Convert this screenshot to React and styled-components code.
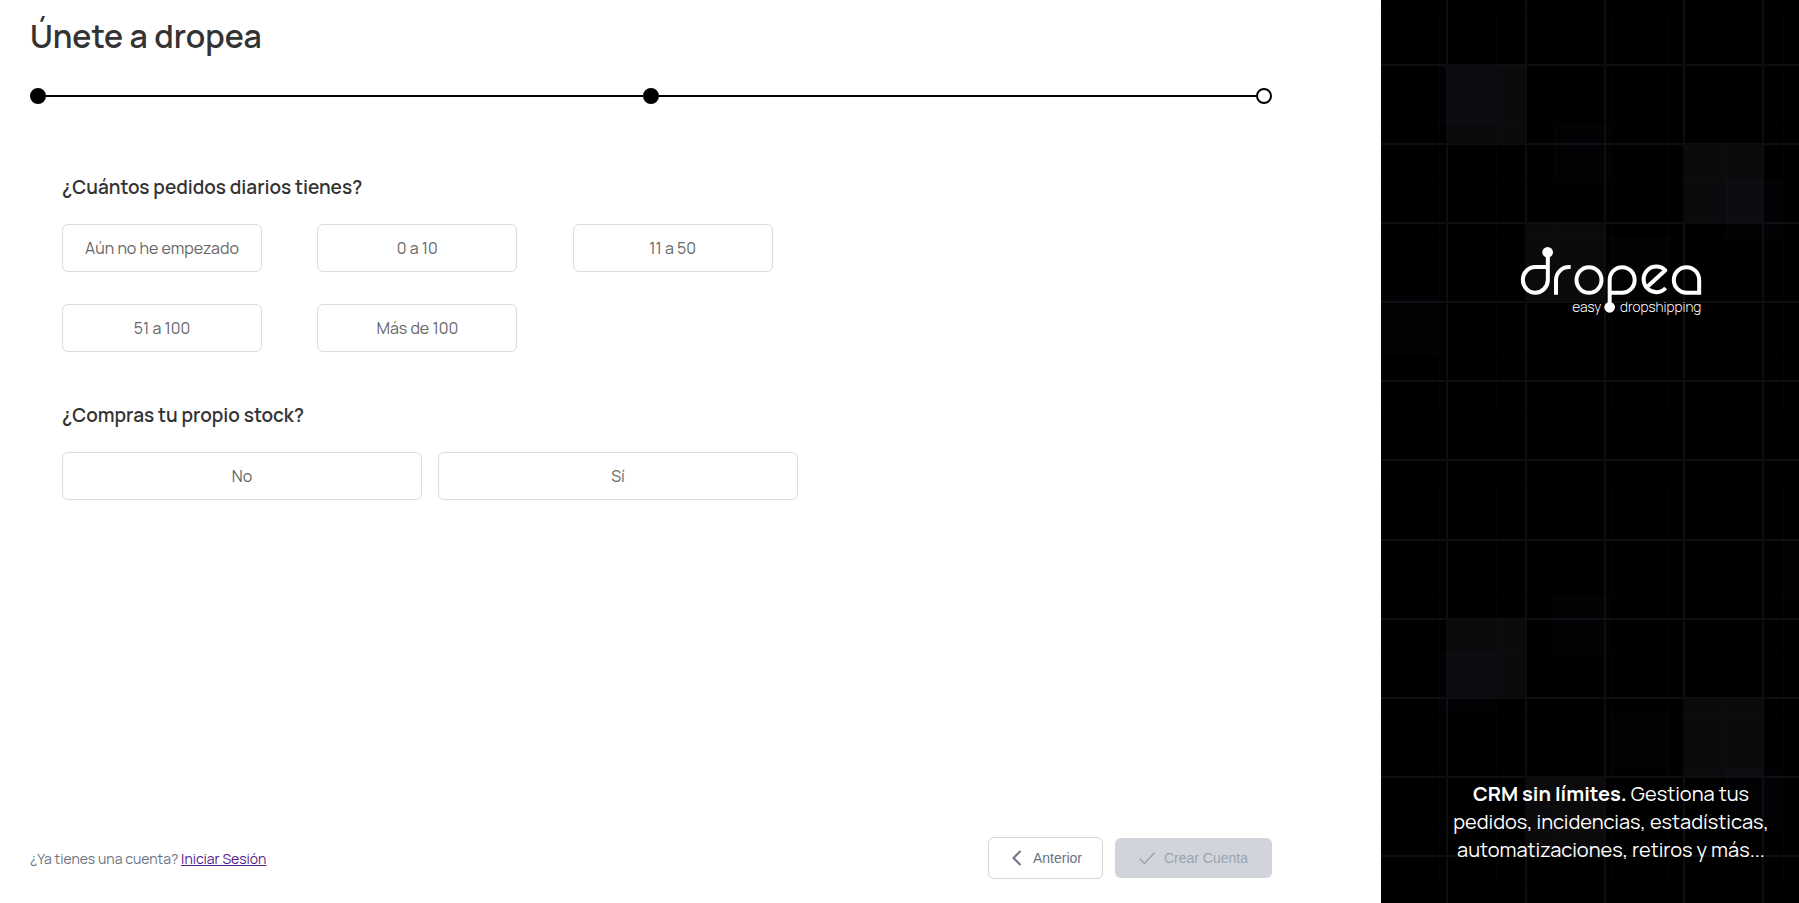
import React, { useState } from "react";
import styled, { createGlobalStyle } from "styled-components";

const GlobalStyle = createGlobalStyle`
  *, *::before, *::after { box-sizing: border-box; }
  body {
    margin: 0;
    background: #fff;
    color: #333;
    font-family: Manrope, Inter, "Liberation Sans", sans-serif;
  }
  h1, h2, p { margin: 0; }
`;

const Page = styled.div`
  display: grid;
  grid-template-columns: minmax(0, 1fr) 418px;
  min-height: 100vh;
`;

const Main = styled.main`
  display: flex;
  flex-direction: column;
  padding: 12px 109px 24px 30px;
`;

const Title = styled.h1`
  font-size: 32px;
  line-height: 48px;
  font-weight: 600;
`;

const Stepper = styled.div`
  display: flex;
  align-items: center;
  margin-top: 28px;
`;

const StepDot = styled.span`
  width: 16px;
  height: 16px;
  border: 2px solid #000;
  border-radius: 50%;
  background: ${({ $done }) => ($done ? "#000" : "#fff")};
`;

const StepLine = styled.span`
  flex: 1;
  height: 2px;
  background: #000;
`;

const Questions = styled.div`
  display: flex;
  flex-direction: column;
  gap: 48px;
  padding: 68px 32px 48px;
`;

const Question = styled.section`
  display: flex;
  flex-direction: column;
  gap: 22px;
`;

const QuestionTitle = styled.h2`
  font-size: 19px;
  line-height: 30px;
  font-weight: 600;
`;

const OptionGrid = styled.div`
  display: grid;
  grid-template-columns: repeat(3, 1fr);
  justify-items: start;
  row-gap: 32px;
  max-width: 766px;
`;

const OptionRow = styled.div`
  display: flex;
  gap: 16px;
`;

const Option = styled.button`
  width: ${({ $wide }) => ($wide ? "360px" : "200px")};
  height: 48px;
  padding: 0;
  border: 1px solid ${({ $selected }) => ($selected ? "#000" : "#dcdcdc")};
  border-radius: 6px;
  background: #fff;
  color: #666;
  font-family: inherit;
  font-size: 16px;
  font-weight: 400;
  cursor: pointer;
`;

const Footer = styled.footer`
  display: flex;
  align-items: center;
  justify-content: space-between;
  margin-top: auto;
`;

const LoginHint = styled.p`
  padding-top: 2px;
  font-size: 14px;
  line-height: 20px;
  font-weight: 400;
  color: #6b7280;
`;

const LoginLink = styled.a`
  color: #551a8b;
`;

const Actions = styled.div`
  display: flex;
  align-items: center;
  gap: 12px;
`;

const ActionButton = styled.button`
  display: flex;
  align-items: center;
  gap: 8px;
  height: 42px;
  padding: 0 20px;
  border: 1px solid #d1d5db;
  border-radius: 6px;
  background: #fff;
  color: #6b7280;
  font-family: "Liberation Sans", Arial, sans-serif;
  font-size: 14px;

  &:disabled {
    gap: 9px;
    height: 40px;
    padding: 0 24px;
    border: 0;
    background: #d1d5db;
    color: #9ca3af;
  }
`;

const Panel = styled.aside`
  position: relative;
  isolation: isolate;
  display: flex;
  flex-direction: column;
  align-items: center;
  justify-content: space-between;
  overflow: hidden;
  padding: 246px 20px 39px 62px;
  background: #000;
`;

const Backdrop = styled.svg`
  position: absolute;
  inset: 0;
  z-index: -1;
  width: 100%;
  height: 100%;
`;

const Pitch = styled.p`
  color: #fff;
  font-size: 20px;
  line-height: 28px;
  text-align: center;
`;

const COARSE = 79;
const FINE = 57;
const coarseX = [66, 145, 224, 303, 382];
const coarseY = [65, 144, 223, 302, 381, 460, 540, 619, 698, 777, 856];
const fineX = [0, 58, 115, 173, 230, 287, 345, 402];
const fineTiles = [9, 483];
const coarseCells = [[65, 65], [302, 144], [144, 223], [65, 619], [302, 698], [144, 777]];
const fineCells = [[58, 67], [173, 124], [345, 181], [230, 239], [0, 296],
  [402, 540], [172, 597], [58, 655], [230, 712], [345, 769]];

function GridBackdrop() {
  return (
    <Backdrop viewBox="0 0 418 903" preserveAspectRatio="xMidYMin slice" aria-hidden="true">
      <g fill="#0d0e0f">
        {coarseX.map((x) => <rect key={x} x={x - 1} y="0" width="2" height="903" />)}
        {coarseY.map((y) => <rect key={y} x="0" y={y - 1} width="418" height="2" />)}
      </g>
      {coarseCells.map(([x, y]) => (
        <rect key={`c${x}-${y}`} x={x} y={y} width={COARSE} height={COARSE} fill="#0b0b0d" />
      ))}
      {fineCells.map(([x, y]) => (
        <rect key={`f${x}-${y}`} x={x} y={y} width={FINE} height={FINE} fill="#4040b0" fillOpacity="0.026" />
      ))}
      {fineTiles.map((top) => (
        <g key={top} fill="#fff" fillOpacity="0.016">
          {fineX.map((x) => <rect key={x} x={x} y={top} width="1" height="401" />)}
          {[0, 1, 2, 3, 4, 5, 6, 7].map((n) => (
            <rect key={n} x="0" y={top + Math.round(n * 57.3)} width="418" height="1" />
          ))}
        </g>
      ))}
    </Backdrop>
  );
}

function Logo() {
  return (
    <svg width="182" height="76" viewBox="60 48 546 228" role="img" aria-label="dropea easy dropshipping">
      <g fill="none" stroke="#fff" strokeWidth="12">
        <path d="M143.500 67V150A37.500 38.500 0 1 1 106 111H143" />
        <path d="M168 194V150A39 39 0 0 1 207 111H212" />
        <ellipse cx="267" cy="150" rx="37.500" ry="38.500" />
        <path d="M329 232V150A37.500 38.500 0 1 1 366 188.500H329" />
        <path d="M438 174L496 121A38 38.500 0 1 0 497 174" strokeLinejoin="round" />
        <path d="M597.500 188.500H560A38 38.500 0 1 1 597.500 150Z" />
      </g>
      <circle cx="143" cy="67" r="16" fill="#fff" />
      <circle cx="329" cy="232" r="16" fill="#fff" />
      <g fill="#fff" fontFamily="Manrope, Lato, sans-serif" fontWeight="300" fontSize="41">
        <text x="304" y="245" textAnchor="end">easy</text>
        <text x="604" y="245" textAnchor="end">dropshipping</text>
      </g>
    </svg>
  );
}

function ChevronIcon() {
  return (
    <svg width="16" height="16" viewBox="0 0 16 16" fill="none" stroke="currentColor" strokeWidth="2" aria-hidden="true">
      <path d="M11.500 1L4.500 8l7 7" />
    </svg>
  );
}

function CheckIcon() {
  return (
    <svg width="16" height="16" viewBox="0 0 16 16" fill="none" stroke="currentColor" strokeWidth="1.500" aria-hidden="true">
      <path d="M0.500 8.500l5 5L15.700 2.500" />
    </svg>
  );
}

const orderOptions = ["Aún no he empezado", "0 a 10", "11 a 50", "51 a 100", "Más de 100"];
const stockOptions = ["No", "Sí"];

export default function App() {
  const [orders, setOrders] = useState(null);
  const [stock, setStock] = useState(null);

  return (
    <>
      <GlobalStyle />
      <Page>
        <Main>
          <Title>Únete a dropea</Title>
          <Stepper>
            <StepDot $done />
            <StepLine />
            <StepDot $done />
            <StepLine />
            <StepDot />
          </Stepper>
          <Questions>
            <Question>
              <QuestionTitle>¿Cuántos pedidos diarios tienes?</QuestionTitle>
              <OptionGrid>
                {orderOptions.map((label) => (
                  <Option key={label} type="button" $selected={orders === label} onClick={() => setOrders(label)}>
                    {label}
                  </Option>
                ))}
              </OptionGrid>
            </Question>
            <Question>
              <QuestionTitle>¿Compras tu propio stock?</QuestionTitle>
              <OptionRow>
                {stockOptions.map((label) => (
                  <Option key={label} type="button" $wide $selected={stock === label} onClick={() => setStock(label)}>
                    {label}
                  </Option>
                ))}
              </OptionRow>
            </Question>
          </Questions>
          <Footer>
            <LoginHint>
              ¿Ya tienes una cuenta? <LoginLink href="#login">Iniciar Sesión</LoginLink>
            </LoginHint>
            <Actions>
              <ActionButton type="button"><ChevronIcon />Anterior</ActionButton>
              <ActionButton type="button" disabled={!orders || !stock}><CheckIcon />Crear Cuenta</ActionButton>
            </Actions>
          </Footer>
        </Main>
        <Panel>
          <GridBackdrop />
          <Logo />
          <Pitch>
            <strong>CRM sin límites.</strong> Gestiona tus pedidos, incidencias, estadísticas, automatizaciones, retiros y más...
          </Pitch>
        </Panel>
      </Page>
    </>
  );
}
